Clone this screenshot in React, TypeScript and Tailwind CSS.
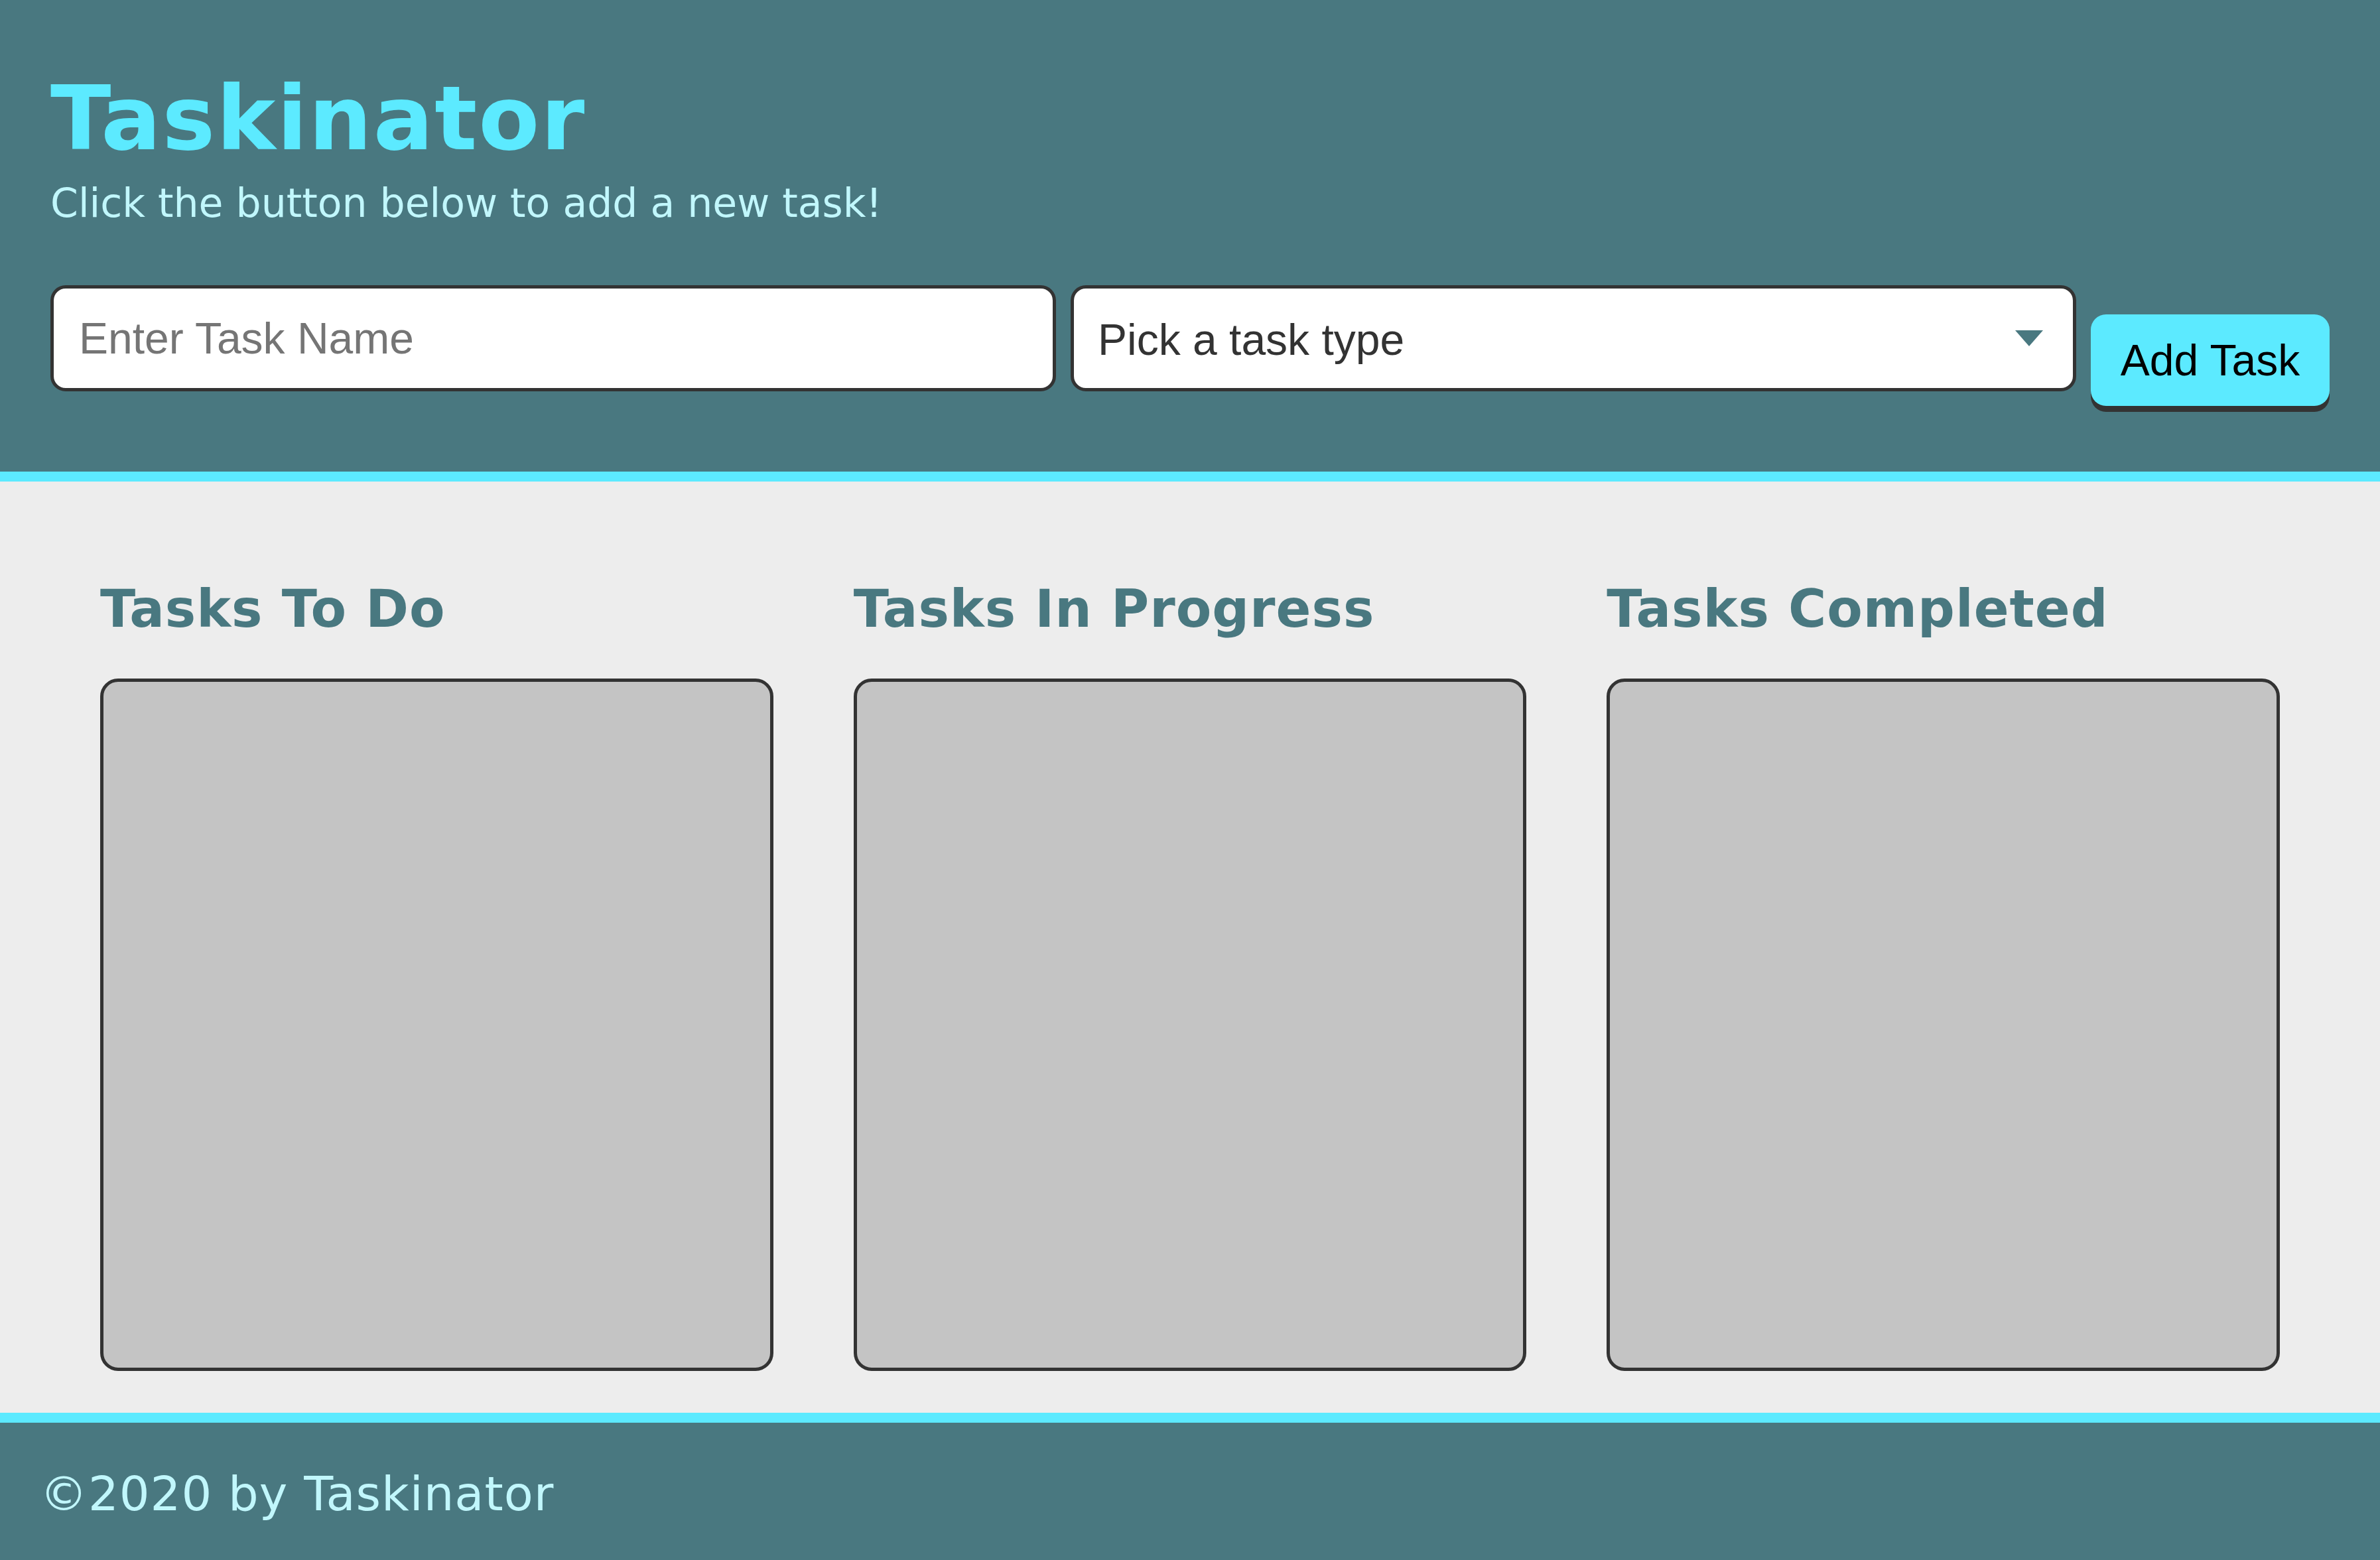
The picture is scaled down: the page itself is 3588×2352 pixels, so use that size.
import { ChangeEvent, useState } from "react";

const COLUMNS = ["Tasks To Do", "Tasks In Progress", "Tasks Completed"];

const TASK_TYPES = ["Print", "Web", "Mobile"];

export default function App() {
  const [taskName, setTaskName] = useState("");
  const [taskType, setTaskType] = useState("");

  return (
    <div className="flex min-h-screen flex-col bg-[#ededed] font-['DejaVu_Sans',Verdana,sans-serif]">
      <header className="border-b-[15px] border-[#5ceaff] bg-[#497880] px-[76px] pt-[112px] pb-[99px]">
        <h1 className="text-[134px] font-bold leading-none tracking-[2px] text-[#5ceaff]">Taskinator</h1>
        <p className="mt-[30px] text-[60px] leading-none text-[#c1f7fc]">
          Click the button below to add a new task!
        </p>

        <form
          className="mt-[94px] grid grid-cols-[1fr_1fr_360px] items-start gap-x-[22px] font-['Liberation_Sans',Arial,sans-serif]"
          onSubmit={(e) => e.preventDefault()}
        >
          <input
            type="text"
            name="task-name"
            value={taskName}
            onChange={(e: ChangeEvent<HTMLInputElement>) => setTaskName(e.target.value)}
            placeholder="Enter Task Name"
            className="h-[160px] w-full min-w-0 rounded-[23px] border-[5px] border-[#333333] bg-white pl-[38px] text-[66px] text-[#333333] outline-none placeholder:text-[#757575]"
          />
          <div className="relative min-w-0">
            <select
              name="task-type"
              value={taskType}
              onChange={(e: ChangeEvent<HTMLSelectElement>) => setTaskType(e.target.value)}
              className="h-[160px] w-full appearance-none rounded-[23px] border-[5px] border-[#333333] bg-white pl-[36px] pt-[4px] text-[66px] text-[#333333] outline-none"
            >
              <option value="" disabled>
                Pick a task type
              </option>
              {TASK_TYPES.map((type) => (
                <option key={type} value={type}>
                  {type}
                </option>
              ))}
            </select>
            <svg
              className="pointer-events-none absolute right-[50px] top-[68px] h-[24px] w-[42px]"
              viewBox="0 0 42 24"
            >
              <path d="M0 0h42L21 24z" fill="#497880" />
            </svg>
          </div>
          <button
            type="submit"
            className="mt-[44px] h-[138px] w-[360px] rounded-[23px] bg-[#5ceaff] text-[66px] text-black shadow-[0_9px_0_#333333]"
          >
            Add Task
          </button>
        </form>
      </header>

      <main className="grid flex-1 grid-cols-3 gap-x-[121px] px-[151px] pt-[153px] pb-[63px]">
        {COLUMNS.map((title) => (
          <section key={title} className="flex flex-col">
            <h2 className="text-[78px] font-bold leading-none tracking-[1px] text-[#497880]">{title}</h2>
            <ul className="mt-[66px] h-[1044px] rounded-[27px] border-[5px] border-[#333333] bg-[#c4c4c4]" />
          </section>
        ))}
      </main>

      <footer className="border-t-[15px] border-[#5ceaff] bg-[#497880] px-[60px] pt-[71px] pb-[64px]">
        <p className="text-[72px] leading-none tracking-[1px] text-[#c1f7fc]">©2020 by Taskinator</p>
      </footer>
    </div>
  );
}
